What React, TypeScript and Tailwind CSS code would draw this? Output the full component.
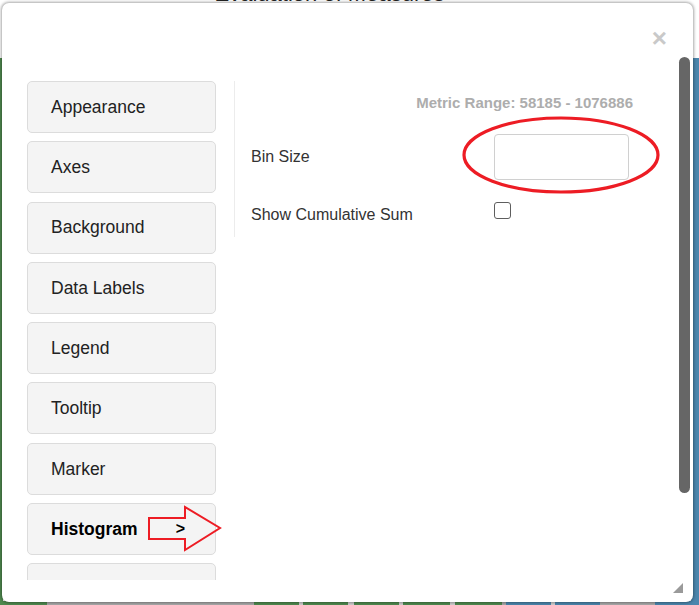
import React from "react";

const sections = [
  "Appearance",
  "Axes",
  "Background",
  "Data Labels",
  "Legend",
  "Tooltip",
  "Marker",
  "Histogram",
  "Zoom",
];

// bars of the chart page that peeks out under the dialog
const bottomBars = [
  { w: 47, c: "bg-[#4f8a4f]" },
  { w: 207, c: "bg-[#a9a9a9]" },
  { w: 45, c: "bg-[#4f8a4f]" },
  { w: 4, c: "bg-[#cfcfcf]" },
  { w: 45, c: "bg-[#4f8a4f]" },
  { w: 6, c: "bg-[#cfcfcf]" },
  { w: 45, c: "bg-[#4f8a4f]" },
  { w: 4, c: "bg-[#cfcfcf]" },
  { w: 47, c: "bg-[#4f8a4f]" },
  { w: 5, c: "bg-[#cfcfcf]" },
  { w: 47, c: "bg-[#4f8a4f]" },
  { w: 4, c: "bg-[#a9a9a9]" },
  { w: 45, c: "bg-[#4b86ad]" },
  { w: 4, c: "bg-[#cfcfcf]" },
  { w: 45, c: "bg-[#4b86ad]" },
  { w: 55, c: "bg-[#a9a9a9]" },
  { w: 44, c: "bg-[#4b86ad]" },
];

export default function App() {
  return (
    <div className="relative w-[699px] h-[605px] overflow-hidden bg-white font-['Liberation_Sans',Arial,sans-serif]">
      {/* page behind the dialog */}
      <div className="absolute inset-0 flex flex-col">
        <div className="h-[58px] flex justify-center">
          <p className="-mt-[17px] ml-[-40px] text-[22px] leading-[22px] text-[#222]">Evaluation of Measures</p>
        </div>
        <div className="flex-1 flex justify-between">
          <div className="w-[3px] bg-[#4f8a4f]" />
          <div className="w-[8px] bg-[#4b86ad]" />
        </div>
        <div className="h-[4px] flex">
          {bottomBars.map((b, i) => (
            <div key={i} className={`${b.c} h-full`} style={{ width: b.w }} />
          ))}
        </div>
      </div>

      {/* dialog */}
      <div className="absolute left-[2px] top-[3px] w-[691px] h-[599px] rounded-[7px] bg-white shadow-[0_0_3px_1px_rgba(0,0,0,0.35)] flex">
        <div className="flex-1 flex flex-col">
          <div className="h-[78px] flex justify-end items-start pt-[22px] pr-[12px]">
            <button className="text-[26px] leading-[26px] font-bold text-[#c9c9c9]">×</button>
          </div>

          <div className="h-[499px] overflow-hidden flex items-start">
            <nav className="ml-[25px] w-[189px] flex flex-col gap-[8.3px]">
              {sections.map((s) => (
                <div
                  key={s}
                  className="h-[52px] shrink-0 rounded-[5px] border border-[#dcdcdc] bg-[#f4f4f4] pl-[23px] pr-[30px] flex items-center justify-between text-[17.5px] text-[#222]"
                >
                  <span className={s === "Histogram" ? "font-bold text-black" : ""}>{s}</span>
                  {s === "Histogram" && <span className="font-bold text-black text-[16px]">&gt;</span>}
                </div>
              ))}
            </nav>

            <section className="ml-[18px] h-[156px] flex-1 border-l border-[#ececec] pl-[16px] pr-[46px] pt-[13px]">
              <p className="text-right text-[15px] leading-[18px] font-bold text-[#adadad]">
                Metric Range: 58185 - 1076886
              </p>
              <div className="mt-[22px] flex items-center">
                <span className="w-[243px] text-[16px] text-[#333]">Bin Size</span>
                <div className="w-[135px] h-[46px] rounded-[4px] border border-[#d0d0d0] bg-white" />
              </div>
              <div className="mt-[22px] flex items-start">
                <span className="w-[243px] mt-[1px] text-[16px] text-[#333]">Show Cumulative Sum</span>
                <span className="w-[17px] h-[17px] rounded-[3px] border-[1.5px] border-[#5e5e5e] bg-white" />
              </div>
            </section>
          </div>
        </div>

        {/* scrollbar */}
        <div className="w-[11px] mr-[3px] pt-[54px]">
          <div className="h-[436px] rounded-full bg-[#666]" />
        </div>

        {/* annotations + resize grip */}
        <svg className="absolute inset-0 pointer-events-none" width="691" height="599" viewBox="0 0 691 599">
          <ellipse cx="559" cy="152" rx="97" ry="37" fill="none" stroke="#ed1c24" strokeWidth="3.2" />
          <polygon
            points="147,515 183,515 183,504 218,525 183,547 183,536 147,536"
            fill="none"
            stroke="#ed1c24"
            strokeWidth="2"
          />
          <polygon points="681,580 681,590 671,590" fill="#9a9a9a" />
        </svg>
      </div>
    </div>
  );
}
